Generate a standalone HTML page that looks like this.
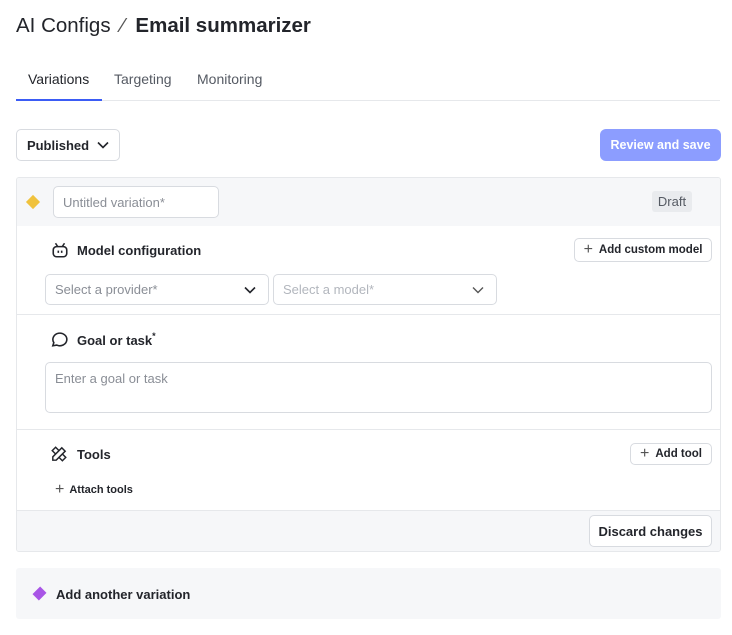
<!DOCTYPE html><html><head><style>
*{box-sizing:border-box;margin:0;padding:0}
body{width:732px;height:635px;background:#fff;font-family:"Liberation Sans",sans-serif;color:#23252b;position:relative;overflow:hidden}
.a{position:absolute}
.btn{position:absolute;border:1px solid #d8dbe0;border-radius:5px;background:#fff;font-size:12px;font-weight:bold;display:flex;align-items:center;justify-content:center;gap:6px}
.inp{position:absolute;border:1px solid #d8dbe0;border-radius:5px;background:#fff;font-size:13px;color:#8a8e96;display:flex;align-items:center;padding-left:9px}
.h{position:absolute;font-size:13px;font-weight:bold;display:flex;align-items:center}
</style></head><body>
<div class="a" style="left:16px;top:12px;font-size:20.5px;line-height:28px;white-space:nowrap">AI Configs <span style="color:#555;margin:0 5px">⁄</span> <b>Email summarizer</b></div>
<div class="a" style="left:28px;top:71px;font-size:14px">Variations</div>
<div class="a" style="left:114px;top:71px;font-size:14px;color:#555a63">Targeting</div>
<div class="a" style="left:197px;top:71px;font-size:14px;color:#555a63">Monitoring</div>
<div class="a" style="left:16px;top:100px;width:704px;height:1px;background:#e6e8eb"></div>
<div class="a" style="left:16px;top:99px;width:86px;height:2px;background:#3b5cf5"></div>
<div class="btn" style="left:16px;top:129px;width:104px;height:32px;font-size:13px;gap:8px">Published <svg width="12" height="8" viewBox="0 0 12 8"><path d="M1 1.5l5 5 5-5" fill="none" stroke="#23252b" stroke-width="1.6"/></svg></div>
<div class="a" style="left:600px;top:129px;width:121px;height:32px;background:#8c9dff;border-radius:6px;color:#fff;font-size:12.5px;font-weight:bold;display:flex;align-items:center;justify-content:center">Review and save</div>
<div class="a" style="left:16px;top:177px;width:705px;height:375px;border:1px solid #e6e8eb;border-radius:3px;overflow:hidden">
 <div class="a" style="left:0;top:0;width:705px;height:48px;background:#f6f7f9"></div>
 <div class="a" style="left:0;top:332px;width:705px;height:42px;background:#f6f7f9;border-top:1px solid #e6e8eb"></div>
 <div class="a" style="left:0;top:136px;width:705px;height:1px;background:#e6e8eb"></div>
 <div class="a" style="left:0;top:251px;width:705px;height:1px;background:#e6e8eb"></div>
</div>
<div class="a" style="left:28px;top:197px;width:10px;height:10px;background:#f0c23d;transform:rotate(45deg)"></div>
<div class="inp" style="left:53px;top:186px;width:166px;height:32px">Untitled variation*</div>
<div class="a" style="left:652px;top:191px;width:40px;height:21px;background:#e9ebee;border-radius:3px;font-size:13px;color:#555a63;display:flex;align-items:center;justify-content:center">Draft</div>
<svg class="a" style="left:51px;top:241px" width="18" height="18" viewBox="0 0 16 16" fill="none" stroke="#23252b" stroke-width="1.4"><rect x="2" y="5" width="12" height="9" rx="3"/><path d="M4 2l2 3M12 2l-2 3M6.5 8.5v2M9.5 8.5v2"/></svg>
<div class="h" style="left:77px;top:241px;height:18px">Model configuration</div>
<div class="btn" style="left:574px;top:238px;width:138px;height:24px;font-size:11.5px"><span style="font-weight:normal;font-size:16px;color:#555">+</span>Add custom model</div>
<div class="inp" style="left:45px;top:274px;width:224px;height:31px">Select a provider*<svg style="position:absolute;right:12px;top:11px" width="12" height="8" viewBox="0 0 12 8"><path d="M1 1.5l5 5 5-5" fill="none" stroke="#23252b" stroke-width="1.6"/></svg></div>
<div class="inp" style="left:273px;top:274px;width:224px;height:31px;color:#b2b6bd">Select a model*<svg style="position:absolute;right:12px;top:11px" width="12" height="8" viewBox="0 0 12 8"><path d="M1 1.5l5 5 5-5" fill="none" stroke="#555" stroke-width="1.4"/></svg></div>
<svg class="a" style="left:50px;top:330px" width="18" height="18" viewBox="0 0 16 16" fill="none" stroke="#23252b" stroke-width="1.4"><path d="M2.5 14l.9-2.8A6.2 5.6 0 1 1 6 13.4z"/></svg>
<div class="h" style="left:77px;top:331px;height:18px">Goal or task<sup style="font-size:9px;position:relative;top:-4px">*</sup></div>
<div class="inp" style="left:45px;top:362px;width:667px;height:51px;align-items:flex-start;padding-top:8px">Enter a goal or task</div>
<svg class="a" style="left:50px;top:445px" width="18" height="18" viewBox="0 0 16 16" fill="none" stroke="#23252b" stroke-width="1.3"><path d="M2.5 10.5l8-8 3 3-8 8h-3z M2 5l3-3 3 3-3 3z M11 8l3 3-3 3-3-3z"/></svg>
<div class="h" style="left:77px;top:445px;height:18px">Tools</div>
<div class="btn" style="left:630px;top:443px;width:82px;height:22px;font-size:11.5px"><span style="font-weight:normal;font-size:16px;color:#555">+</span>Add tool</div>
<div class="a" style="left:55px;top:481px;font-size:11px;font-weight:bold;display:flex;align-items:center;gap:5px"><span style="font-weight:normal;font-size:16px;color:#555">+</span>Attach tools</div>
<div class="btn" style="left:589px;top:515px;width:123px;height:32px;font-size:13px">Discard changes</div>
<div class="a" style="left:16px;top:568px;width:705px;height:51px;background:#f6f7f9;border-radius:3px"></div>
<div class="a" style="left:35px;top:589px;width:9px;height:9px;background:#a855e6;transform:rotate(45deg) scale(1,1.2)"></div>
<div class="h" style="left:56px;top:585px;height:18px">Add another variation</div>
</body></html>
